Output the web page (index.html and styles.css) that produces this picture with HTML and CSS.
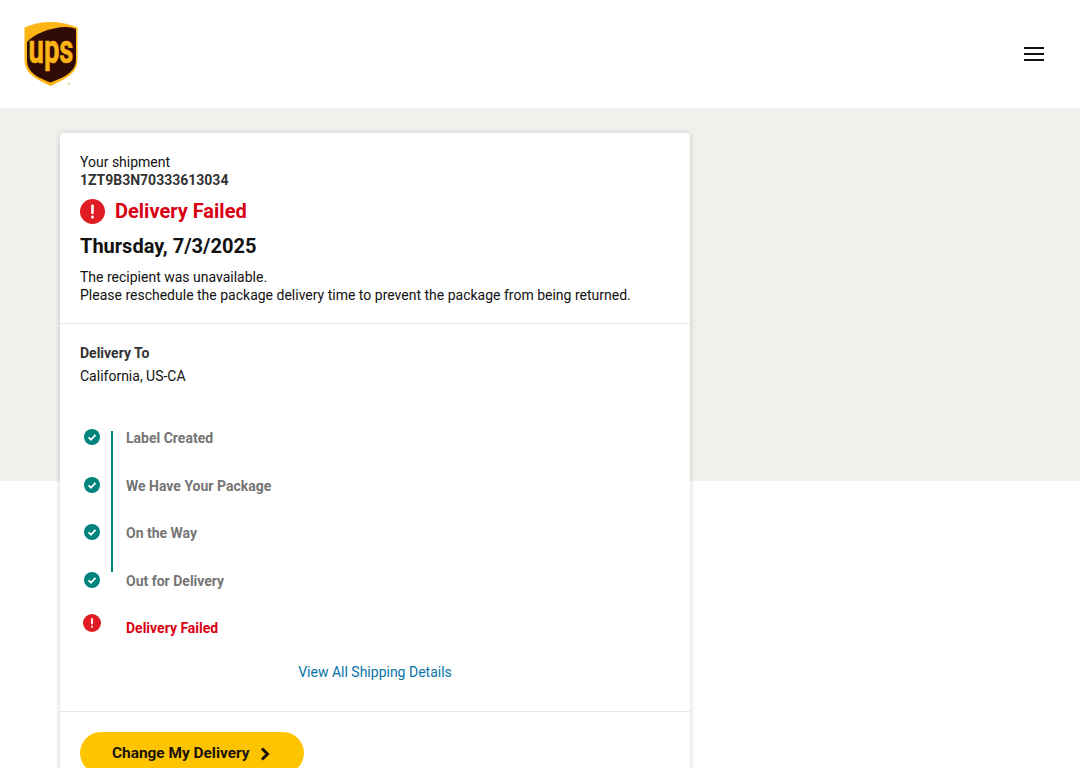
FILE: index.html
```html
<!DOCTYPE html>
<html lang="en">
<head>
    <meta charset="UTF-8">
    <meta name="viewport" content="width=device-width, initial-scale=1.0">
    <title>UPS Tracking</title>
    <link rel="stylesheet" href="styles.css">
</head>
<body>
    <header class="header">
        <svg class="logo" width="54" height="66" viewBox="0 0 54 66">
            <path d="M26 0C17 0 8 2 0.500 5.500V38C0.500 50 9 56 26.500 64C44 56 53.500 50 53.500 38V5.500C45 2 36 0 26 0Z" fill="#fdb515"/>
            <path d="M3 20C10 12 25 6 40 5C45 4.800 49 5.500 52 7V38C52 48 44 54 26.500 60.500C9 54 3 48 3 38Z" fill="#300b06"/>
            <text class="logo-text" x="27" y="41" textLength="45" lengthAdjust="spacingAndGlyphs">ups</text>
            <circle cx="45" cy="61.500" r="1.200" fill="#e8d9a0"/>
        </svg>
        <button class="menu-btn" aria-label="Menu">
            <span></span>
            <span></span>
            <span></span>
        </button>
    </header>

    <main class="page">
        <div class="card">
            <section class="card-section summary">
                <p class="label">Your shipment</p>
                <p class="tracking">1ZT9B3N70333613034</p>
                <div class="status">
                    <svg width="25" height="25" viewBox="0 0 25 25">
                        <circle cx="12.500" cy="12.500" r="12.500" fill="#df1b24"/>
                        <rect x="11.200" y="5.500" width="2.600" height="9.500" rx="1" fill="#fff"/>
                        <rect x="11.200" y="16.600" width="2.600" height="2.800" rx="1" fill="#fff"/>
                    </svg>
                    <h1>Delivery Failed</h1>
                </div>
                <h2 class="date">Thursday, 7/3/2025</h2>
                <p class="message">The recipient was unavailable.<br>Please reschedule the package delivery time to prevent the package from being returned.</p>
            </section>

            <section class="card-section details">
                <p class="dest-title">Delivery To</p>
                <p class="dest">California, US-CA</p>

                <ul class="timeline">
                    <li class="step done line">
                        <svg class="check" width="16" height="16" viewBox="0 0 16 16"><circle cx="8" cy="8" r="8" fill="#00857d"/><path d="M4.500 8.300L7 10.700L11.500 5.800" fill="none" stroke="#fff" stroke-width="1.800"/></svg>
                        <span>Label Created</span>
                    </li>
                    <li class="step done line">
                        <svg class="check" width="16" height="16" viewBox="0 0 16 16"><circle cx="8" cy="8" r="8" fill="#00857d"/><path d="M4.500 8.300L7 10.700L11.500 5.800" fill="none" stroke="#fff" stroke-width="1.800"/></svg>
                        <span>We Have Your Package</span>
                    </li>
                    <li class="step done line line-end">
                        <svg class="check" width="16" height="16" viewBox="0 0 16 16"><circle cx="8" cy="8" r="8" fill="#00857d"/><path d="M4.500 8.300L7 10.700L11.500 5.800" fill="none" stroke="#fff" stroke-width="1.800"/></svg>
                        <span>On the Way</span>
                    </li>
                    <li class="step done">
                        <svg class="check" width="16" height="16" viewBox="0 0 16 16"><circle cx="8" cy="8" r="8" fill="#00857d"/><path d="M4.500 8.300L7 10.700L11.500 5.800" fill="none" stroke="#fff" stroke-width="1.800"/></svg>
                        <span>Out for Delivery</span>
                    </li>
                    <li class="step failed">
                        <svg class="alert" width="18" height="18" viewBox="0 0 18 18"><circle cx="9" cy="9" r="9" fill="#df1b24"/><rect x="8.100" y="4" width="1.800" height="6.500" rx=".7" fill="#fff"/><rect x="8.100" y="11.800" width="1.800" height="2" rx=".7" fill="#fff"/></svg>
                        <span>Delivery Failed</span>
                    </li>
                </ul>

                <a class="all-link" href="#">View All Shipping Details</a>
            </section>

            <section class="card-section actions">
                <a class="btn" href="#">
                    Change My Delivery
                    <svg class="chevron" width="10" height="14" viewBox="0 0 10 14"><path d="M2 1.500L7.500 7L2 12.500" fill="none" stroke="#1a1208" stroke-width="3"/></svg>
                </a>
            </section>
        </div>
    </main>
</body>
</html>
```

FILE: styles.css
```css
html, body {
    height: 100%;
    overflow: hidden;
}
body {
    margin: 0;
    font-family: Roboto, "Liberation Sans", sans-serif;
    font-size: 14px;
    line-height: 18px;
    color: #121212;
    background: #fff;
}
p, h1, h2, ul {
    margin: 0;
    padding: 0;
}
.header {
    display: flex;
    align-items: center;
    justify-content: space-between;
    height: 108px;
    padding: 0 36px 0 24px;
    box-sizing: border-box;
    background: #fff;
}
.logo {
    display: block;
    margin-top: 2px;
    overflow: visible;
}
.logo-text {
    font-family: Roboto, sans-serif;
    font-size: 40px;
    font-weight: 700;
    fill: #fdb515;
    stroke: #fdb515;
    stroke-width: 0.5px;
    text-anchor: middle;
}
.menu-btn {
    display: flex;
    flex-direction: column;
    gap: 4px;
    width: 20px;
    padding: 0;
    border: none;
    background: none;
}
.menu-btn span {
    display: block;
    height: 2px;
    background: #121212;
}
.page {
    padding: 25px 60px 0;
    background: linear-gradient(#f0f0ec 373px, #fff 373px);
    min-height: 660px;
    box-sizing: border-box;
}
.card {
    width: 630px;
    background: #fff;
    border-radius: 4px;
    box-shadow: 0 1px 6px rgba(0,0,0,0.18);
}
.card-section {
    padding: 20px;
}
.card-section + .card-section {
    border-top: 1px solid #e8e8e6;
}
.summary {
    padding-bottom: 19px;
}
.tracking {
    font-weight: 700;
    color: #333;
}
.status {
    display: flex;
    align-items: center;
    gap: 10px;
    margin-top: 10px;
}
.status h1 {
    font-size: 20px;
    line-height: 25px;
    font-weight: 700;
    color: #d90012;
}
.date {
    margin-top: 9px;
    font-size: 20px;
    line-height: 26px;
    font-weight: 700;
}
.message {
    margin-top: 9px;
}
.details {
    padding-bottom: 30px;
}
.dest-title {
    font-weight: 700;
    color: #333;
}
.dest {
    margin-top: 5px;
}
.timeline {
    list-style: none;
    margin-top: 46px;
}
.step {
    display: flex;
    height: 47.500px;
    font-weight: 700;
    line-height: 14px;
    color: #757575;
}
.step svg {
    flex: none;
}
.step span {
    display: block;
    flex: 1;
    padding-left: 13px;
    border-left: 2px solid transparent;
}
.line span {
    border-left-color: #00857d;
}
.line-end span {
    align-self: flex-start;
    height: 46px;
}
.check {
    margin: -2px 11px 0 4px;
}
.alert {
    margin: -7px 10px 0 3px;
}
.failed {
    color: #d90012;
    height: 42px;
}
.all-link {
    display: block;
    text-align: center;
    color: #0673a8;
    text-decoration: none;
}
.actions {
    padding-top: 20px;
}
.btn {
    display: inline-flex;
    align-items: center;
    gap: 10px;
    height: 42px;
    padding: 0 34px 0 32px;
    border-radius: 21px;
    background: #ffc400;
    color: #1a1208;
    font-weight: 700;
    font-size: 15.400px;
    text-decoration: none;
}
.chevron {
    margin-top: 2px;
}
```
